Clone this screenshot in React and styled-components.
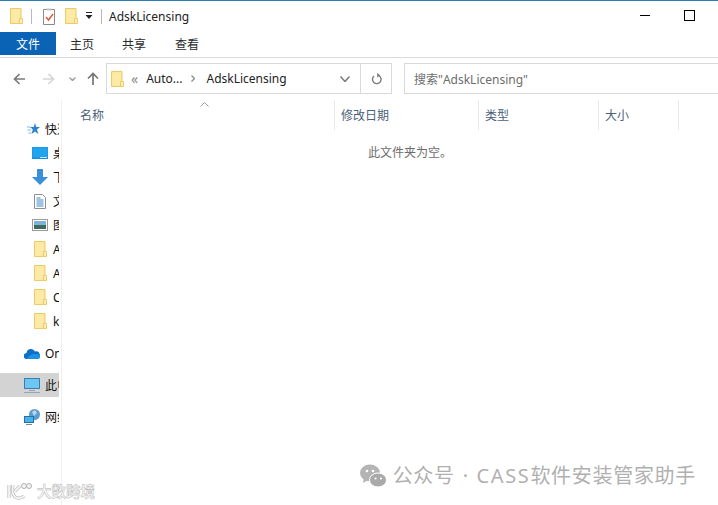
import React from 'react';
import styled, { createGlobalStyle } from 'styled-components';

const Global = createGlobalStyle`
  html, body { margin: 0; padding: 0; background: #fff; }
  body { font-family: "Noto Sans", "Noto Sans CJK SC", sans-serif; font-size: 12px; color: #1a1a1a; }
`;

const Win = styled.div`
  position: relative; width: 718px; height: 505px; overflow: hidden; background: #fff;
  border-top: 1px solid #2c7fb0; box-sizing: border-box;
`;
const TitleBar = styled.div`
  height: 31px; display: flex; align-items: center; padding-left: 10px; box-sizing: border-box; padding-bottom: 1px;
`;
const Sep = styled.span`
  width: 1px; height: 15px; background: #b9b9b9; margin: ${p => p.$m};
`;
const QuickIcon = styled.svg`
  display: block; flex: none; margin: ${p => p.$m || 0};
`;
const Spacer = styled.span`
  width: ${p => p.$w}px; flex: none;
`;
const TitleText = styled.span`
  margin-left: 7px; font-size: 12px; color: #222;
`;
const WinButtons = styled.div`
  margin-left: auto; display: flex; align-items: center; gap: 34px; padding-right: 23px; padding-bottom: 1px;
`;
const Minimize = styled.span`
  display: block; width: 10px; height: 1px; background: #000;
`;
const Maximize = styled.span`
  display: block; width: 9px; height: 9px; border: 1px solid #000;
`;
const Ribbon = styled.div`
  height: 26px; display: flex; align-items: flex-start; border-bottom: 1px solid #dadada; box-sizing: border-box;
`;
const RibbonTab = styled.div`
  height: 23px; width: ${p => p.$w}px; display: flex; align-items: center; justify-content: center;
  color: ${p => (p.$active ? '#fff' : '#2b2b2b')}; background: ${p => (p.$active ? '#0a63b4' : 'transparent')};
  font-size: 12px;
`;
const NavRow = styled.div`
  height: 42px; display: flex; align-items: flex-start; padding-top: 5px; box-sizing: border-box;
`;
const NavButtons = styled.div`
  width: 106px; height: 31px; flex: none; display: flex; align-items: center; padding-left: 13px; box-sizing: border-box;
`;
const AddressBox = styled.div`
  width: 286px; height: 31px; box-sizing: border-box; flex: none; border: 1px solid #d9d9d9; display: flex; align-items: center;
`;
const Crumbs = styled.div`
  flex: 1; display: flex; align-items: center; padding-left: 4px; min-width: 0;
`;
const Crumb = styled.span`
  color: ${p => p.$color || '#222'}; font-size: ${p => p.$size || 12}px; margin: ${p => p.$m || 0};
`;
const AddrButton = styled.div`
  width: ${p => p.$w}px; height: 100%; display: flex; align-items: center; justify-content: center; flex: none;
  box-sizing: border-box; border-left: ${p => (p.$line ? '1px solid #d9d9d9' : 'none')};
`;
const SearchBox = styled.div`
  margin-left: 12px; flex: 1; height: 31px; box-sizing: border-box; border: 1px solid #d9d9d9; border-right: none;
  padding-left: 9px; display: flex; align-items: center; color: #6d6d6d; font-size: 12px;
`;
const Body = styled.div`
  display: flex; height: 405px;
`;
const Sidebar = styled.nav`
  width: 62px; flex: none; box-sizing: border-box; border-right: 1px solid #f0f0f0; padding-top: 17px;
`;
const Row = styled.div`
  width: 59px; height: 24px; display: flex; align-items: center; overflow: hidden; white-space: nowrap;
  box-sizing: border-box; padding-left: ${p => p.$pad}px; margin-top: ${p => p.$gap || 0}px;
  background: ${p => (p.$selected ? '#d3d3d3' : 'transparent')}; color: #111; font-size: 12px;
`;
const RowIcon = styled.svg`
  flex: none; margin-right: ${p => p.$mr}px; display: block;
`;
const Main = styled.div`
  flex: 1; position: relative; min-width: 0;
`;
const Header = styled.div`
  height: 30px; display: flex;
`;
const Col = styled.div`
  width: ${p => p.$w}px; flex: none; box-sizing: border-box; border-right: 1px solid #e9e9e9;
  padding-left: ${p => p.$pad}px; display: flex; align-items: center; color: #4c607a; font-size: 12px;
`;
const SortCaret = styled.svg`
  position: absolute; left: 138px; top: 2px;
`;
const Empty = styled.div`
  text-align: center; color: #6d6d6d; font-size: 12px; margin-top: 13px; padding-left: 40px; box-sizing: border-box;
`;
const Mark = styled.div`
  position: absolute; right: 22px; bottom: 17px; display: flex; align-items: center; gap: 6px;
  color: #b0b0b0; font-size: 20px; line-height: 24px; letter-spacing: 0.7px; word-spacing: 2px;
  font-family: "Noto Sans", "Noto Sans CJK SC", sans-serif; font-weight: 400;
`;
const MarkLatin = styled.span`
  letter-spacing: 1.6px;
`;
const Stamp = styled.div`
  position: absolute; left: 7px; bottom: 5px; display: flex; align-items: center; gap: 3px;
  font-size: 14.5px; line-height: 18px; color: #f4f4f4; font-family: "Noto Sans CJK SC", sans-serif; font-weight: 700;
  -webkit-text-stroke: 0.4px #b4b4b4;
`;

const Folder = ({ m, as: A = QuickIcon, mr }) => (
  <A as="svg" width={13} height={16} viewBox="0 0 13 16" $m={m} $mr={mr}>
    <path d="M.5.5h10.500v15H.5z" fill="#fde58f" stroke="#ebcb6c" />
    <path d="M1.500 1.500h8.500v13H1.500z" fill="#fdeaa6" />
    <path d="M9.500 10.500h3v5h-3z" fill="#fff0b8" stroke="#ebcb6c" />
  </A>
);

const Check = () => (
  <QuickIcon width="13" height="17" viewBox="0 0 13 17">
    <path d="M.5 1.500h11v15H.5z" fill="#fff" stroke="#8a8a8a" />
    <path d="M3.500 .5h5v2h-5z" fill="#c4c4c4" />
    <path d="M3 9l2.500 3L10 6" fill="none" stroke="#e0552d" strokeWidth="1.4" />
  </QuickIcon>
);

const DownBar = () => (
  <QuickIcon width="8" height="8" viewBox="0 0 8 8">
    <path d="M1 .5h6" stroke="#222" />
    <path d="M.5 3h7L4 7z" fill="#222" />
  </QuickIcon>
);

const BackArrow = ({ color, m }) => (
  <QuickIcon width="12" height="12" viewBox="0 0 12 12" $m={m}>
    <path d="M1.500 6H12M6.500 1L1.500 6l5 5" fill="none" stroke={color} strokeWidth="1.7" />
  </QuickIcon>
);

const ForwardArrow = ({ color, m }) => (
  <QuickIcon width="12" height="12" viewBox="0 0 12 12" $m={m}>
    <path d="M10.500 6H0M5.500 1l5 5-5 5" fill="none" stroke={color} strokeWidth="1.7" />
  </QuickIcon>
);

const UpArrow = ({ m }) => (
  <QuickIcon width="12" height="13" viewBox="0 0 12 13" $m={m}>
    <path d="M6 13V1.500M1 6.500l5-5 5 5" fill="none" stroke="#757575" strokeWidth="1.7" />
  </QuickIcon>
);

const ChevDown = ({ w = 7, h = 4, color = '#8a8a8a', m, sw = 1.4 }) => (
  <QuickIcon width={w} height={h} viewBox={`0 0 ${w} ${h}`} $m={m}>
    <path d={`M.5 .5L${w / 2} ${h - 0.5}L${w - 0.5} .5`} fill="none" stroke={color} strokeWidth={sw} />
  </QuickIcon>
);

const ChevRight = ({ m }) => (
  <QuickIcon width="4" height="7" viewBox="0 0 4 7" $m={m}>
    <path d="M.5 .5L3.500 3.500L.5 6.500" fill="none" stroke="#8a8a8a" strokeWidth="1.3" />
  </QuickIcon>
);

const Star = () => (
  <RowIcon as="svg" $mr={5} width="13" height="12" viewBox="0 0 13 12">
    <path d="M8 0l1.300 4H13L10 6.500 11.300 11 8 8.400 4.500 11 5.800 6.600 3 4h3.800z" fill="#2b83d0" />
    <path d="M0 4h3.500M.5 7h3.500M1.500 10h3" stroke="#7db8e6" />
  </RowIcon>
);
const Desktop = () => (
  <RowIcon as="svg" $mr={5} width="16" height="12" viewBox="0 0 16 12">
    <rect width="16" height="12" rx=".5" fill="#0f8fe6" />
    <rect x=".5" y=".5" width="15" height="10" fill="#22a3ee" />
    <path d="M8 10.500h7" stroke="#c5e6fa" />
  </RowIcon>
);
const Download = () => (
  <RowIcon as="svg" $mr={5} width="16" height="16" viewBox="0 0 16 16">
    <path d="M5 0h6v8h5l-8 8-8-8h5z" fill="#3a8fd9" />
  </RowIcon>
);
const Doc = () => (
  <RowIcon as="svg" $mr={7} width="12" height="15" viewBox="0 0 12 15">
    <path d="M.5.5h8l3 3v11H.5z" fill="#fff" stroke="#8f8f8f" />
    <path d="M2.500 4h4M2.500 6h7M2.500 8h7M2.500 10h7M2.500 12h7" stroke="#3d8cc4" />
  </RowIcon>
);
const Pic = () => (
  <RowIcon as="svg" $mr={5} width="16" height="12" viewBox="0 0 16 12">
    <rect x=".5" y=".5" width="15" height="11" fill="#fff" stroke="#9a9a9a" />
    <rect x="2" y="2" width="12" height="4" fill="#7fb2d9" />
    <rect x="2" y="6" width="12" height="4" fill="#3f6a5a" />
  </RowIcon>
);
const Cloud = () => (
  <RowIcon as="svg" $mr={5} width="16" height="11" viewBox="0 0 16 11">
    <path d="M3 11a3 3 0 0 1-.5-6 4.500 4.500 0 0 1 8.500-1.500A3.500 3.500 0 0 1 13 11z" fill="#0f6fc6" />
    <path d="M3 11h10.500a2.500 2.500 0 0 0 0-5H9L5 8z" fill="#1b93e3" />
  </RowIcon>
);
const Monitor = () => (
  <RowIcon as="svg" $mr={5} width="16" height="15" viewBox="0 0 16 15">
    <rect x=".5" y=".5" width="15" height="10" fill="#6cc7f2" stroke="#3a7fb3" />
    <path d="M5 12.500h6" stroke="#9aa7b3" />
    <path d="M0 14.500h16" stroke="#9aa7b3" />
  </RowIcon>
);
const Network = () => (
  <RowIcon as="svg" $mr={5} width="16" height="16" viewBox="0 0 16 16">
    <circle cx="10.500" cy="5.500" r="5.500" fill="#5a9bd0" />
    <path d="M8 3l3-2 2 3-3 3z" fill="#b8d8ee" />
    <rect x=".5" y="7.500" width="9" height="6" fill="#46b3ea" stroke="#2a6f9f" />
    <path d="M2 15.500h6" stroke="#6f8ea5" />
  </RowIcon>
);
const SideFolder = () => <Folder as={RowIcon} mr={6} />;

const Refresh = () => (
  <QuickIcon width="11" height="12" viewBox="0 0 11 12">
    <path d="M7.300 2.300A4.300 4.300 0 1 1 3 3" fill="none" stroke="#7b7b7b" strokeWidth="1.4" />
    <path d="M6.200 0v4.500l3-2.300z" fill="#7b7b7b" />
  </QuickIcon>
);

const WeChat = () => (
  <QuickIcon width="27" height="24" viewBox="0 0 27 24">
    <ellipse cx="10" cy="9" rx="10" ry="8.500" fill="#b4b4b4" />
    <path d="M4 14l-1 5 5-3z" fill="#b4b4b4" />
    <ellipse cx="18" cy="16" rx="8.500" ry="7" fill="#a9a9a9" stroke="#fff" />
    <circle cx="7" cy="7" r="1.300" fill="#fff" />
    <circle cx="13" cy="7" r="1.300" fill="#fff" />
    <circle cx="15.500" cy="14.500" r="1.100" fill="#fff" />
    <circle cx="21" cy="14.500" r="1.100" fill="#fff" />
  </QuickIcon>
);

const StampLogo = () => (
  <QuickIcon width="27" height="18" viewBox="0 0 27 18">
    <path d="M2 3v13M6 3c-1 5-1 9 2 12 3 2 7 1 9-1M8 9l5-5" fill="none" stroke="#bdbdbd" strokeWidth="3.200" />
    <path d="M2 3v13M6 3c-1 5-1 9 2 12 3 2 7 1 9-1M8 9l5-5" fill="none" stroke="#f4f4f4" strokeWidth="1.800" />
    <circle cx="17" cy="4" r="2.500" fill="#f4f4f4" stroke="#b0b0b0" />
    <circle cx="22" cy="4" r="2.500" fill="#f4f4f4" stroke="#b0b0b0" />
  </QuickIcon>
);

export default function App() {
  return (
    <Win>
      <Global />
      <TitleBar>
        <Folder />
        <Sep $m="0 11px 0 8px" />
        <Check />
        <Spacer $w={9} />
        <Folder />
        <Spacer $w={7} />
        <DownBar />
        <Sep $m="0 0 0 8px" />
        <TitleText>AdskLicensing</TitleText>
        <WinButtons>
          <Minimize />
          <Maximize />
        </WinButtons>
      </TitleBar>
      <Ribbon>
        <RibbonTab $active $w={56}>文件</RibbonTab>
        <RibbonTab $w={52}>主页</RibbonTab>
        <RibbonTab $w={52}>共享</RibbonTab>
        <RibbonTab $w={54}>查看</RibbonTab>
      </Ribbon>
      <NavRow>
        <NavButtons>
          <BackArrow color="#7b7b7b" />
          <ForwardArrow color="#d6d6d6" m="0 0 0 18px" />
          <ChevDown color="#9a9a9a" m="0 0 0 14px" />
          <UpArrow m="0 0 0 11px" />
        </NavButtons>
        <AddressBox>
          <Crumbs>
            <Folder />
            <Crumb $m="0 0 0 7px" $color="#8a8a8a" $size={14}>«</Crumb>
            <Crumb $m="0 0 0 8px">Auto...</Crumb>
            <ChevRight m="0 0 0 9px" />
            <Crumb $m="0 0 0 11px">AdskLicensing</Crumb>
          </Crumbs>
          <AddrButton $w={31}><ChevDown w={10} h={6} color="#777" sw={1.500} /></AddrButton>
          <AddrButton $w={31} $line><Refresh /></AddrButton>
        </AddressBox>
        <SearchBox>搜索"AdskLicensing"</SearchBox>
      </NavRow>
      <Body>
        <Sidebar>
          <Row $pad={27}><Star />快速访问</Row>
          <Row $pad={32}><Desktop />桌面</Row>
          <Row $pad={32}><Download />下载</Row>
          <Row $pad={34}><Doc />文档</Row>
          <Row $pad={32}><Pic />图片</Row>
          <Row $pad={34}><SideFolder />Adsk</Row>
          <Row $pad={34}><SideFolder />Auto</Row>
          <Row $pad={34}><SideFolder />CAD</Row>
          <Row $pad={34}><SideFolder />key</Row>
          <Row $pad={24} $gap={8}><Cloud />OneDrive</Row>
          <Row $pad={24} $gap={8} $selected><Monitor />此电脑</Row>
          <Row $pad={24} $gap={8}><Network />网络</Row>
        </Sidebar>
        <Main>
          <SortCaret width="9" height="5" viewBox="0 0 9 5">
            <path d="M.5 4.500L4.500 .5l4 4" fill="none" stroke="#9a9a9a" />
          </SortCaret>
          <Header>
            <Col $w={273} $pad={18}>名称</Col>
            <Col $w={144} $pad={6}>修改日期</Col>
            <Col $w={120} $pad={6}>类型</Col>
            <Col $w={80} $pad={6}>大小</Col>
          </Header>
          <Empty>此文件夹为空。</Empty>
        </Main>
      </Body>
      <Mark><WeChat /><span>公众号 · <MarkLatin>CASS</MarkLatin>软件安装管家助手</span></Mark>
      <Stamp><StampLogo />大数跨境</Stamp>
    </Win>
  );
}
